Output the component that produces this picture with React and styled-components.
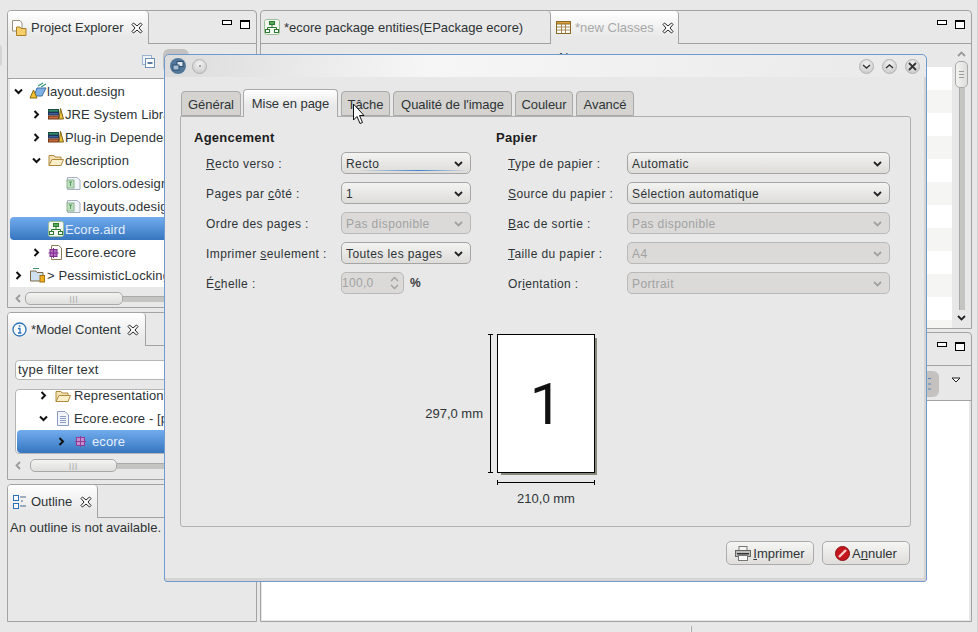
import styled, { createGlobalStyle } from "styled-components";

const GlobalStyle = createGlobalStyle`
  html, body {
    margin: 0;
    padding: 0;
    background: #e8e8e8;
  }
  body {
    font-family: "Liberation Sans", Arial, sans-serif;
    font-size: 12px;
    color: #2e3436;
    overflow: hidden;
  }
`;

const line = "#a3a3a3";

const Page = styled.div`
  position: relative;
  width: 977px;
  height: 632px;
  background: #e8e8e8;
  border-right: 1px solid #d2d2d2;
  overflow: hidden;
  display: flex;
  flex-direction: column;
`;

const Workbench = styled.div`
  display: flex;
  gap: 3px;
  padding: 10px 0 0 7px;
  height: 612px;
  box-sizing: border-box;
`;

const Trim = styled.div`
  position: absolute;
  left: -4px;
  top: 45px;
  width: 6px;
  height: 21px;
  background: #d4d4d2;
  border-radius: 3px;
`;

const Column = styled.div`
  display: flex;
  flex-direction: column;
  width: ${(p) => p.$width}px;
  gap: ${(p) => p.$gap}px;
`;

const Panel = styled.section`
  display: flex;
  flex-direction: column;
  height: ${(p) => p.$height}px;
  box-sizing: border-box;
  border: 1px solid ${line};
  border-radius: 4px 4px 0 0;
  overflow: hidden;
  flex: none;
`;

const TabBar = styled.div`
  display: flex;
  height: 33px;
  flex: none;
`;

const ViewTab = styled.div`
  display: flex;
  align-items: center;
  box-sizing: border-box;
  width: ${(p) => p.$width}px;
  padding-left: ${(p) => p.$pad ?? 3}px;
  gap: 4px;
  font-size: 13px;
  white-space: nowrap;
  border-right: 1px solid ${line};
  background: ${(p) =>
    p.$active ? "linear-gradient(#ffffff, #e8e8e8 80%)" : "transparent"};
  border-bottom: ${(p) => (p.$active ? "none" : `1px solid ${line}`)};
  border-radius: 0 4px 0 0;
  color: ${(p) => (p.$dim ? "#a9a9a9" : "#2e3436")};
`;

const TabFill = styled.div`
  flex: 1;
  display: flex;
  justify-content: flex-end;
  align-items: flex-start;
  gap: 8px;
  padding: 9px 6px 0 0;
  border-bottom: 1px solid ${line};
`;

const TabClose = styled.span`
  display: inline-flex;
  margin-left: ${(p) => p.$gap ?? 4}px;
`;

const MinBtn = styled.span`
  width: 8px;
  height: 3px;
  border: 1px solid #000;
  background: #fff;
`;

const MaxBtn = styled.span`
  width: 8px;
  height: 6px;
  border: 1px solid #000;
  border-top-width: 2px;
  background: #fff;
`;

const PanelToolbar = styled.div`
  height: 35px;
  flex: none;
  display: flex;
  box-sizing: border-box;
  border-bottom: 1px solid ${line};
  padding: 11px 0 0 134px;
  gap: 8px;
`;

const ToolbarToggle = styled.div`
  width: 26px;
  height: 24px;
  margin-top: -6px;
  background: #c3c2c0;
  border-radius: 6px;
`;

const TreeRow = styled.div`
  display: flex;
  align-items: center;
  height: 23px;
  box-sizing: border-box;
  padding-left: ${(p) => 3 + p.$depth * 18}px;
  white-space: nowrap;
  font-size: 13px;
  letter-spacing: 0.1px;
  border-radius: 4px;
  color: ${(p) => (p.$selected ? "#e4eefa" : "#2e3436")};
  background: ${(p) =>
    p.$selected ? "linear-gradient(#72acee, #3676bf)" : "transparent"};
  margin-top: ${(p) => p.$top ?? 0}px;
`;

const TreeArea = styled.div`
  margin-left: 2px;
  height: 208px;
  flex: none;
  background: #fff;
  overflow: hidden;

  ${TreeRow} {
    padding-top: 1px;
  }
`;

const Chevron = styled.span`
  display: inline-flex;
  justify-content: center;
  width: 10px;
  flex: none;
  margin-right: ${(p) => p.$gap ?? 7}px;
`;

const NodeIcon = styled.span`
  display: inline-flex;
  flex: none;
  margin-right: ${(p) => p.$gap ?? 1}px;
`;

const HScroll = styled.div`
  display: flex;
  align-items: center;
  height: 15px;
  margin: 4px 0 0 7px;
  flex: none;
`;

const ScrollArrow = styled.span`
  display: inline-flex;
  width: ${(p) => p.$width}px;
  color: #9a9a9a;
`;

const HThumb = styled.div`
  width: ${(p) => p.$width}px;
  height: 13px;
  box-sizing: border-box;
  border: 1px solid #a9a9a9;
  border-radius: 5px;
  background: linear-gradient(#f3f3f1, #dededc);
  display: flex;
  align-items: center;
  justify-content: center;
  color: #9c9c9c;
  font-size: 8px;
  letter-spacing: 1px;
`;

const HTrack = styled.div`
  flex: 1;
  height: 5px;
  background: #c4c4c2;
  border-top: 1px solid #aaa;
`;

const FilterField = styled.div`
  height: 20px;
  margin: 14px 0 0 7px;
  box-sizing: border-box;
  background: #fff;
  border: 1px solid #b5b5b5;
  border-radius: 4px;
  padding-left: 2px;
  font-size: 13px;
  line-height: 18px;
  letter-spacing: 0.2px;
  flex: none;
`;

const TreeBox = styled.div`
  height: 65px;
  margin: 9px 0 0 7px;
  padding-left: 1px;
  box-sizing: border-box;
  background: #fff;
  border: 1px solid #b5b5b5;
  border-radius: 4px;
  overflow: hidden;
  flex: none;
`;

const OutlineText = styled.p`
  margin: 2px 0 0 2px;
  font-size: 13px;
  white-space: nowrap;
`;

const TableArea = styled.div`
  flex: 1;
  display: flex;
  padding-left: 1px;
  min-height: 0;
`;

const TableBody = styled.div`
  flex: 1;
  display: flex;
  flex-direction: column;
  min-width: 0;
  padding-top: 6px;
`;

const TableHead = styled.div`
  height: 17px;
  flex: none;
  padding-left: 297px;
  font-size: 13px;
  box-sizing: border-box;
`;

const TableRow = styled.div`
  height: 23px;
  flex: none;
  background: ${(p) => (p.$odd ? "#f5f5f3" : "#ffffff")};
`;

const VScroll = styled.div`
  width: 19px;
  flex: none;
  display: flex;
  flex-direction: column;
  align-items: center;
  padding-top: 7px;
`;

const VThumb = styled.div`
  width: 13px;
  height: 27px;
  margin-top: 4px;
  box-sizing: border-box;
  border: 1px solid #a9a9a9;
  border-radius: 5px;
  background: linear-gradient(90deg, #f3f3f1, #dededc);
  display: flex;
  align-items: center;
  justify-content: center;
  flex: none;
`;

const Grip = styled.span`
  width: 5px;
  height: 5px;
  border-top: 1px solid #9c9c9c;
  border-bottom: 1px solid #9c9c9c;
  position: relative;
  &::after {
    content: "";
    position: absolute;
    left: 0;
    right: 0;
    top: 2px;
    height: 1px;
    background: #9c9c9c;
  }
`;

const VTrack = styled.div`
  width: 5px;
  height: 222px;
  margin-bottom: 5px;
  background: #c4c4c2;
  border-left: 1px solid #aaa;
  flex: none;
`;

const GrayToolbar = styled.div`
  height: 35px;
  flex: none;
  box-sizing: border-box;
  border-bottom: 1px solid ${line};
  display: flex;
  justify-content: flex-end;
  padding: 5px 10px 0 0;
  gap: 12px;
`;

const ToggledTool = styled.div`
  width: 30px;
  height: 26px;
  background: #c3c2c0;
  border-radius: 6px;
  display: flex;
  justify-content: flex-end;
  align-items: center;
  padding-right: 8px;
`;

const ViewMenu = styled.span`
  display: inline-flex;
  margin-top: 6px;
  align-self: flex-start;
`;

const WhiteArea = styled.div`
  flex: 1;
  margin: 0 2px 1px 1px;
  background: #fff;
`;

const StatusBar = styled.div`
  height: 20px;
  padding-left: 690px;
  padding-top: 14px;
  box-sizing: border-box;
`;

const StatusTick = styled.div`
  width: 1px;
  height: 6px;
  background: #a9a9a9;
  border-left: 1px solid #f4f4f4;
`;

/* dialog */

const Dialog = styled.div`
  position: absolute;
  left: 164px;
  top: 54px;
  width: 763px;
  height: 528px;
  box-sizing: border-box;
  border: 1px solid #6f99cf;
  border-radius: 5px 5px 3px 3px;
  background: #e8e8e8;
  box-shadow: inset -2px -3px 0 #d6d5d3;
  display: flex;
  flex-direction: column;
`;

const TitleBar = styled.div`
  height: 22px;
  flex: none;
  display: flex;
  align-items: center;
  padding: 0 6px 0 5px;
  gap: 6px;
  background: linear-gradient(100deg, #dcdcdc 0%, #f6f6f6 35%, #e9e9e9 100%);
  border-radius: 5px 5px 0 0;
`;

const TitleSpacer = styled.div`
  flex: 1;
`;

const RoundBtn = styled.span`
  width: 15px;
  height: 15px;
  display: inline-flex;
  align-items: center;
  justify-content: center;
  border-radius: 50%;
  background: radial-gradient(circle at 50% 30%, #f2f2f2, #c4c4c4);
  border: 1px solid #b2b2b2;
  box-sizing: border-box;
  margin-left: ${(p) => p.$gap ?? 0}px;
`;

const Dot = styled.span`
  width: 2px;
  height: 2px;
  border-radius: 50%;
  background: #8d8d8d;
`;

const DialogBody = styled.div`
  flex: 1;
  padding: 12px 0 0 15px;
  display: flex;
  flex-direction: column;
`;

const Tabs = styled.div`
  display: flex;
  align-items: flex-end;
  height: 27px;
  padding-left: 1px;
  gap: 3px;
  flex: none;
  position: relative;
  z-index: 1;
`;

const Tab = styled.div`
  height: ${(p) => (p.$active ? 28 : 25)}px;
  width: ${(p) => p.$width}px;
  margin-bottom: ${(p) => (p.$active ? -1 : 0)}px;
  margin-left: ${(p) => (p.$active ? -1 : 0)}px;
  box-sizing: border-box;
  border: 1px solid #a9a9a9;
  border-bottom: ${(p) => (p.$active ? "none" : "1px solid #a9a9a9")};
  border-radius: 4px 4px 0 0;
  display: flex;
  align-items: center;
  justify-content: center;
  padding: ${(p) => (p.$active ? "0 0 1px" : "1px 0 0")};
  background: ${(p) =>
    p.$active ? "linear-gradient(#ffffff, #e8e8e8 60%)" : "#d4d3d0"};
  font-size: 13px;
  letter-spacing: -0.05px;
  white-space: nowrap;
`;

const Pane = styled.div`
  width: 731px;
  height: 411px;
  box-sizing: border-box;
  border: 1px solid #b0b0b0;
  border-radius: 0 3px 3px 3px;
  padding: 12px 0 0 13px;
  flex: none;
`;

const FormGrid = styled.div`
  display: flex;
`;

const Section = styled.div`
  width: ${(p) => p.$width}px;
  flex: none;
`;

const SectionTitle = styled.h3`
  margin: 0 0 7px;
  height: 16px;
  padding-top: 1px;
  box-sizing: border-box;
  font-size: 13px;
  line-height: 16px;
  letter-spacing: 0.25px;
  font-weight: bold;
  color: #1c1c1c;
`;

const Rows = styled.div`
  display: flex;
  flex-direction: column;
  gap: 8px;
  padding-left: 12px;
`;

const Row = styled.div`
  display: flex;
  align-items: center;
  height: 22px;
`;

const Label = styled.label`
  width: ${(p) => p.$width}px;
  flex: none;
  padding-top: 1px;
  font-size: 12px;
  letter-spacing: 0.4px;
  white-space: nowrap;
  u {
    text-underline-offset: 1px;
  }
`;

const Combo = styled.div`
  position: relative;
  width: ${(p) => p.$width}px;
  height: 22px;
  box-sizing: border-box;
  border: 1px solid ${(p) => (p.$disabled ? "#b9b9b9" : "#a5a5a5")};
  border-radius: 5px;
  display: flex;
  align-items: center;
  justify-content: space-between;
  padding: 1px 7px 0 4px;
  font-size: 12px;
  letter-spacing: 0.4px;
  color: ${(p) => (p.$disabled ? "#a2a2a2" : "#2e3436")};
  background: ${(p) =>
    p.$disabled ? "#dbdad8" : "linear-gradient(#f3f3f1, #dddcd9)"};
  &::after {
    content: "";
    display: ${(p) => (p.$focus ? "block" : "none")};
    position: absolute;
    left: 18px;
    right: 3px;
    bottom: 2px;
    height: 1px;
    background: linear-gradient(90deg, transparent, #3d82cf 55%, transparent);
  }
`;

const Spin = styled.div`
  width: 63px;
  height: 22px;
  box-sizing: border-box;
  border: 1px solid #b9b9b9;
  border-radius: 5px;
  background: #dbdad8;
  color: #a2a2a2;
  display: flex;
  align-items: center;
  justify-content: space-between;
  padding: 0 4px 0 0;
  font-size: 12px;
  letter-spacing: 0.3px;
`;

const Unit = styled.span`
  margin-left: 6px;
  font-size: 12px;
  font-weight: bold;
  color: #3b3b3b;
`;

const Preview = styled.div`
  display: grid;
  grid-template-columns: 1fr 98px 1fr;
  grid-template-rows: 139px auto;
  margin: 40px 0 0 -12px;
`;

const HeightDim = styled.div`
  display: flex;
  justify-content: flex-end;
  align-items: center;
  gap: 5px;
  font-size: 13px;
`;

const DimText = styled.span`
  margin-top: 20px;
`;

const VDimLine = styled.div`
  width: 5px;
  height: 100%;
  box-sizing: border-box;
  border-top: 1px solid #000;
  border-bottom: 1px solid #000;
  margin-right: 4px;
  background: linear-gradient(#000, #000) center / 1px 100% no-repeat;
`;

const Sheet = styled.div`
  box-sizing: border-box;
  background: #fff;
  border: 1px solid #000;
  box-shadow: 3px 3px 0 -1px #87877c;
  display: flex;
  align-items: center;
  justify-content: center;
  font-family: Roboto, sans-serif;
  font-weight: 400;
  font-size: 58px;
  line-height: 1;
  color: #111;
`;

const WidthDim = styled.div`
  grid-column: 2;
  margin-top: 7px;
  display: flex;
  flex-direction: column;
  align-items: center;
  font-size: 13px;
  white-space: nowrap;
`;

const HDimLine = styled.div`
  width: 100%;
  height: 5px;
  box-sizing: border-box;
  border-left: 1px solid #000;
  border-right: 1px solid #000;
  margin-bottom: 6px;
  background: linear-gradient(#000, #000) center / 100% 1px no-repeat;
`;

const Footer = styled.div`
  display: flex;
  justify-content: flex-end;
  gap: 8px;
  width: 730px;
  margin-top: 14px;
`;

const Button = styled.div`
  width: 88px;
  height: 24px;
  box-sizing: border-box;
  border: 1px solid #acacac;
  border-radius: 5px;
  background: linear-gradient(#f5f5f3, #dfdedb);
  display: flex;
  align-items: center;
  justify-content: center;
  gap: 2px;
  font-size: 13px;
`;

const CursorLayer = styled.svg`
  position: absolute;
  left: 352px;
  top: 103px;
  z-index: 2;
`;

/* drawn icons */

const Down = () => (
  <svg width="9" height="7" viewBox="0 0 9 7">
    <path d="M1 1.5 L4.5 5 L8 1.5" fill="none" stroke="#111" strokeWidth="2" />
  </svg>
);

const Right = () => (
  <svg width="7" height="9" viewBox="0 0 7 9">
    <path d="M1.5 1 L5 4.5 L1.5 8" fill="none" stroke="#111" strokeWidth="2" />
  </svg>
);

const ComboArrow = ({ off }) => (
  <svg width="9" height="6" viewBox="0 0 9 6">
    <path
      d="M1 1 L4.5 4.5 L8 1"
      fill="none"
      stroke={off ? "#a2a2a2" : "#222"}
      strokeWidth="1.8"
    />
  </svg>
);

const CloseX = () => (
  <svg width="12" height="12" viewBox="0 0 12 12">
    <path
      d="M1 2.5 L2.5 1 L6 4 L9.5 1 L11 2.5 L8 6 L11 9.5 L9.5 11 L6 8 L2.5 11 L1 9.5 L4 6 Z"
      fill="#fff"
      stroke="#222"
      strokeWidth="1"
    />
  </svg>
);

const Folder = () => (
  <svg width="16" height="14" viewBox="0 0 16 14">
    <path d="M1 2.5 H6 L7 4 H13 V12.5 H1 Z" fill="#f4e2b4" stroke="#b08a3c" />
    <path d="M1 12.5 L4 6.5 H15.5 L13 12.5 Z" fill="#fbeecb" stroke="#b08a3c" />
  </svg>
);

const ExplorerIcon = () => (
  <svg width="16" height="18" viewBox="0 0 16 18">
    <path d="M1.5 1.5 H9 L11 4 V12 H1.5 Z" fill="#fff" stroke="#9a8f7a" />
    <path d="M5.5 8 H9 L10 9.5 H15 V16.5 H5.5 Z" fill="#f7cf68" stroke="#a57f2c" />
  </svg>
);

const DesignIcon = () => (
  <svg width="18" height="18" viewBox="0 0 18 18">
    <path d="M5 14 L13 14 L17 6 L8 6 Z" fill="#7fb0e6" stroke="#3f6ea8" />
    <path d="M9 4 L14 1 M12 5 L17 2" stroke="#3d9a78" strokeWidth="1.4" fill="none" />
    <path d="M4.5 8 L8 16 H1 Z" fill="#f2c230" stroke="#8a6a10" />
  </svg>
);

const LibIcon = () => (
  <svg width="16" height="12" viewBox="0 0 16 12">
    <rect x="0.5" y="1.5" width="10" height="2.5" fill="#2f8a70" stroke="#1c4d40" />
    <rect x="0.5" y="4.5" width="10" height="2.5" fill="#3a5f9c" stroke="#1f3358" />
    <rect x="0.5" y="8" width="10" height="3" fill="#c4683a" stroke="#70391c" />
    <path d="M12.5 0.5 L15.5 11 H11 Z" fill="#f0c040" stroke="#7c6214" />
  </svg>
);

const OdesignIcon = () => (
  <svg width="15" height="15" viewBox="0 0 15 15">
    <path d="M1.5 1.5 H11 L14 4 V13.5 H1.5 Z" fill="#f2f5fa" stroke="#a6b0bd" />
    <rect x="1" y="4" width="7" height="8" fill="#bfe0c0" stroke="#8cb28e" />
    <path d="M3 6 H6 M4.5 6 V10" stroke="#4f9a55" />
  </svg>
);

const DiagramIcon = () => (
  <svg width="16" height="16" viewBox="0 0 16 16">
    <rect x="0.5" y="0.5" width="15" height="15" rx="2" fill="#f2f8f0" stroke="#9dc09a" />
    <rect x="5.5" y="2.5" width="5" height="3" fill="#5aa85a" stroke="#2e7a30" />
    <path d="M8 5.5 V8.5 M3.5 10.5 V8.5 H12.5 V10.5" stroke="#2e7a30" fill="none" />
    <rect x="1.5" y="10.5" width="4" height="3" fill="#fff" stroke="#2e7a30" />
    <rect x="10.5" y="10.5" width="4" height="3" fill="#fff" stroke="#2e7a30" />
  </svg>
);

const EcoreGlyph = () => (
  <svg width="11" height="11" viewBox="0 0 11 11">
    <rect x="1.5" y="1.5" width="8" height="8" fill="#c98acb" stroke="#8d3f98" />
    <path d="M5.5 0 V11 M0 5.5 H11" stroke="#8d3f98" />
  </svg>
);

const EcoreFile = () => (
  <svg width="15" height="15" viewBox="0 0 15 15">
    <path d="M3.5 0.5 H10.5 L13.5 3 V14.5 H3.5 Z" fill="#fff" stroke="#8a7a55" />
    <rect x="2" y="4.5" width="7" height="7" fill="#b66bc0" stroke="#7c2f8a" />
    <path d="M5.5 3 V13 M0.5 8 H10.5" stroke="#7c2f8a" />
  </svg>
);

const ProjectClosed = () => (
  <svg width="17" height="16" viewBox="0 0 17 16">
    <path d="M1.5 4 H7 L8 5.5 H14 V14 H1.5 Z" fill="#cfe0f2" stroke="#7a6a45" />
    <path d="M4 1.5 L10 1.5" stroke="#3d9a78" />
    <rect x="11" y="8.5" width="4.5" height="6.5" fill="#f0b020" stroke="#a37410" />
  </svg>
);

const DocIcon = () => (
  <svg width="12" height="15" viewBox="0 0 12 15">
    <path d="M0.5 0.5 H8 L11.5 4 V14.5 H0.5 Z" fill="#f1f4fb" stroke="#8b9cc0" />
    <path d="M3 5.5 H9 M3 7.5 H9 M3 9.5 H9 M3 11.5 H9" stroke="#8b9cc0" />
  </svg>
);

const InfoIcon = () => (
  <svg width="15" height="15" viewBox="0 0 15 15">
    <circle cx="7.5" cy="7.5" r="6.5" fill="#fff" stroke="#2a72b8" strokeWidth="1.3" />
    <path d="M6 6.5 H8 V11 M6 11 H9.5" stroke="#2a72b8" strokeWidth="1.3" fill="none" />
    <rect x="6.8" y="3.2" width="1.6" height="1.6" fill="#2a72b8" />
  </svg>
);

const OutlineIcon = () => (
  <svg width="14" height="14" viewBox="0 0 14 14">
    <rect x="0.5" y="0.5" width="5" height="5" fill="#fff" stroke="#2a72b8" />
    <rect x="0.5" y="8.5" width="5" height="5" fill="#fff" stroke="#2a72b8" />
    <path d="M7 2 H13 M8 6 H10 M7 11 H13" stroke="#4a6a8a" fill="none" />
  </svg>
);

const TableIcon = () => (
  <svg width="15" height="13" viewBox="0 0 15 13">
    <rect x="0.5" y="0.5" width="14" height="12" fill="#fff" stroke="#8a6a20" />
    <rect x="0.5" y="0.5" width="14" height="2.5" fill="#d8a040" stroke="#8a6a20" />
    <path d="M5.5 3 V12 M9.5 3 V12 M1 6 H14 M1 9 H14" stroke="#a58a50" />
  </svg>
);

const CollapseAll = () => (
  <svg width="13" height="13" viewBox="0 0 13 13">
    <rect x="0.5" y="0.5" width="9" height="9" fill="#eef3fa" stroke="#9db4d0" />
    <rect x="3.5" y="3.5" width="9" height="9" fill="#fff" stroke="#6d8fb8" />
    <path d="M5.5 8 H10.5" stroke="#24507e" strokeWidth="1.4" />
  </svg>
);

const AppGlobe = () => (
  <svg width="16" height="16" viewBox="0 0 16 16">
    <circle cx="8" cy="8" r="8" fill="#51789a" />
    <rect x="7" y="3.5" width="6" height="5" fill="#dfe8f0" stroke="#2e4e6e" />
    <rect x="3" y="7" width="6" height="5" fill="#a8c0d6" stroke="#2e4e6e" />
  </svg>
);

const Chev = ({ up }) => (
  <svg width="9" height="7" viewBox="0 0 9 7">
    <path d={up ? "M1 5 L4.5 2 L8 5" : "M1 2 L4.5 5 L8 2"} fill="none" stroke="#333" strokeWidth="1.4" />
  </svg>
);

const DialogX = () => (
  <svg width="9" height="9" viewBox="0 0 9 9">
    <path d="M1 1 L8 8 M8 1 L1 8" stroke="#333" strokeWidth="1.8" />
  </svg>
);

const SpinArrows = () => (
  <svg width="9" height="14" viewBox="0 0 9 14">
    <path d="M1 5 L4.5 1.5 L8 5 M1 9 L4.5 12.5 L8 9" fill="none" stroke="#a2a2a2" strokeWidth="1.4" />
  </svg>
);

const LeftArrow = () => (
  <svg width="6" height="9" viewBox="0 0 6 9">
    <path d="M5 1 L1.5 4.5 L5 8" fill="none" stroke="currentColor" strokeWidth="1.8" />
  </svg>
);

const UpArrow = ({ down }) => (
  <svg width="9" height="6" viewBox="0 0 9 6">
    <path
      d={down ? "M1 1 L4.5 4.5 L8 1" : "M1 5 L4.5 1.5 L8 5"}
      fill="none"
      stroke={down ? "#222" : "#999"}
      strokeWidth="1.8"
    />
  </svg>
);

const TreeGlyph = () => (
  <svg width="3" height="12" viewBox="0 0 3 12">
    <path d="M0 0.5 H3 M0 6 H3 M0 11 H3" stroke="#5b80b8" />
  </svg>
);

const Printer = () => (
  <svg width="16" height="15" viewBox="0 0 16 15">
    <rect x="4" y="0.5" width="8" height="4" fill="#f6f6f6" stroke="#777" />
    <rect x="0.5" y="4.5" width="15" height="6" fill="#bdbdbd" stroke="#666" />
    <rect x="2" y="7" width="12" height="1.5" fill="#333" />
    <rect x="3.5" y="9.5" width="9" height="5" fill="#fafafa" stroke="#777" />
  </svg>
);

const StopIcon = () => (
  <svg width="15" height="15" viewBox="0 0 15 15">
    <circle cx="7.5" cy="7.5" r="7" fill="#c4161c" stroke="#8a1014" />
    <path d="M4 11 L11 4" stroke="#f6d0d0" strokeWidth="2.4" />
  </svg>
);

const Arrowhead = () => (
  <svg width="10" height="6" viewBox="0 0 10 6">
    <path d="M1 1 H9 L5 5 Z" fill="#fff" stroke="#222" />
  </svg>
);

const Node = ({ depth, arrow, icon, text, gap, chevGap, top, selected }) => (
  <TreeRow $depth={depth} $top={top} $selected={selected}>
    <Chevron $gap={chevGap}>
      {arrow === "down" ? <Down /> : arrow === "right" ? <Right /> : null}
    </Chevron>
    <NodeIcon $gap={gap}>{icon}</NodeIcon>
    {text}
  </TreeRow>
);

const Select = ({ width, value, disabled, focus }) => (
  <Combo $width={width} $disabled={disabled} $focus={focus}>
    {value}
    <ComboArrow off={disabled} />
  </Combo>
);

const stripes = [0, 1, 0, 1, 0, 1, 0, 1, 0, 1, 0, 1];

export default function App() {
  return (
    <>
      <GlobalStyle />
      <Page>
        <Trim />
        <Workbench>
          <Column $width={250} $gap={4}>
            <Panel $height={298}>
              <TabBar>
                <ViewTab $active $width={141}>
                  <ExplorerIcon />
                  Project Explorer
                  <TabClose><CloseX /></TabClose>
                </ViewTab>
                <TabFill><MinBtn /><MaxBtn /></TabFill>
              </TabBar>
              <PanelToolbar>
                <CollapseAll />
                <ToolbarToggle />
              </PanelToolbar>
              <TreeArea>
                <Node depth={0} arrow="down" chevGap={6} gap={0} icon={<DesignIcon />} text="layout.design" />
                <Node depth={1} arrow="right" icon={<LibIcon />} text="JRE System Library" />
                <Node depth={1} arrow="right" icon={<LibIcon />} text="Plug-in Dependencies" />
                <Node depth={1} arrow="down" icon={<Folder />} text="description" />
                <Node depth={2} gap={2} icon={<OdesignIcon />} text="colors.odesign" />
                <Node depth={2} gap={2} icon={<OdesignIcon />} text="layouts.odesign" />
                <Node depth={1} selected icon={<DiagramIcon />} text="Ecore.aird" />
                <Node depth={1} arrow="right" gap={2} icon={<EcoreFile />} text="Ecore.ecore" />
                <Node depth={0} arrow="right" chevGap={6} icon={<ProjectClosed />} text="> PessimisticLocking" />
              </TreeArea>
              <HScroll>
                <ScrollArrow $width={10}><LeftArrow /></ScrollArrow>
                <HThumb $width={98}>|||</HThumb>
                <HTrack />
              </HScroll>
            </Panel>
            <Panel $height={168}>
              <TabBar>
                <ViewTab $active $width={138} $pad={4}>
                  <InfoIcon />
                  *Model Content
                  <TabClose $gap={2}><CloseX /></TabClose>
                </ViewTab>
                <TabFill />
              </TabBar>
              <FilterField>type filter text</FilterField>
              <TreeBox>
                <Node depth={1} top={-6} arrow="right" chevGap={7} gap={3} icon={<Folder />} text="Representations" />
                <Node depth={1} arrow="down" chevGap={9} gap={5} icon={<DocIcon />} text="Ecore.ecore - [p" />
                <Node depth={2} selected arrow="right" chevGap={9} gap={6} icon={<EcoreGlyph />} text="ecore" />
              </TreeBox>
              <HScroll>
                <ScrollArrow $width={15}><LeftArrow /></ScrollArrow>
                <HThumb $width={87}>|||</HThumb>
                <HTrack />
              </HScroll>
            </Panel>
            <Panel $height={138}>
              <TabBar>
                <ViewTab $active $width={90} $pad={5}>
                  <OutlineIcon />
                  Outline
                  <TabClose><CloseX /></TabClose>
                </ViewTab>
                <TabFill />
              </TabBar>
              <OutlineText>An outline is not available.</OutlineText>
            </Panel>
          </Column>
          <Column $width={712} $gap={3}>
            <Panel $height={319}>
              <TabBar>
                <ViewTab $width={290}>
                  <DiagramIcon />
                  *ecore package entities(EPackage ecore)
                </ViewTab>
                <ViewTab $active $dim $width={128} $pad={5}>
                  <TableIcon />
                  *new Classes
                  <TabClose><CloseX /></TabClose>
                </ViewTab>
                <TabFill><MinBtn /><MaxBtn /></TabFill>
              </TabBar>
              <TableArea>
                <TableBody>
                  <TableHead>N</TableHead>
                  {stripes.map((odd, i) => (
                    <TableRow key={i} $odd={odd} />
                  ))}
                </TableBody>
                <VScroll>
                  <UpArrow />
                  <VThumb><Grip /></VThumb>
                  <VTrack />
                  <UpArrow down />
                </VScroll>
              </TableArea>
            </Panel>
            <Panel $height={290}>
              <TabBar>
                <TabFill><MinBtn /><MaxBtn /></TabFill>
              </TabBar>
              <GrayToolbar>
                <ToggledTool><TreeGlyph /></ToggledTool>
                <ViewMenu><Arrowhead /></ViewMenu>
              </GrayToolbar>
              <WhiteArea />
            </Panel>
          </Column>
        </Workbench>
        <StatusBar><StatusTick /></StatusBar>

        <Dialog>
          <TitleBar>
            <AppGlobe />
            <RoundBtn><Dot /></RoundBtn>
            <TitleSpacer />
            <RoundBtn><Chev /></RoundBtn>
            <RoundBtn $gap={2}><Chev up /></RoundBtn>
            <RoundBtn $gap={2}><DialogX /></RoundBtn>
          </TitleBar>
          <DialogBody>
            <Tabs>
              <Tab $width={60}>Général</Tab>
              <Tab $active $width={95}>Mise en page</Tab>
              <Tab $width={49}>Tâche</Tab>
              <Tab $width={119}>Qualité de l'image</Tab>
              <Tab $width={58}>Couleur</Tab>
              <Tab $width={58}>Avancé</Tab>
            </Tabs>
            <Pane>
              <FormGrid>
                <Section $width={302}>
                  <SectionTitle>Agencement</SectionTitle>
                  <Rows>
                    <Row>
                      <Label $width={135}><u>R</u>ecto verso :</Label>
                      <Select width={130} value="Recto" focus />
                    </Row>
                    <Row>
                      <Label $width={135}>Pages par <u>c</u>ôté :</Label>
                      <Select width={130} value="1" />
                    </Row>
                    <Row>
                      <Label $width={135}>Ordre des pages :</Label>
                      <Select width={130} value="Pas disponible" disabled />
                    </Row>
                    <Row>
                      <Label $width={135}>Imprimer <u>s</u>eulement :</Label>
                      <Select width={130} value="Toutes les pages" />
                    </Row>
                    <Row>
                      <Label $width={135}>É<u>c</u>helle :</Label>
                      <Spin>100,0<SpinArrows /></Spin>
                      <Unit>%</Unit>
                    </Row>
                  </Rows>
                </Section>
                <Section $width={400}>
                  <SectionTitle>Papier</SectionTitle>
                  <Rows>
                    <Row>
                      <Label $width={119}><u>T</u>ype de papier :</Label>
                      <Select width={263} value="Automatic" />
                    </Row>
                    <Row>
                      <Label $width={119}><u>S</u>ource du papier :</Label>
                      <Select width={263} value="Sélection automatique" />
                    </Row>
                    <Row>
                      <Label $width={119}><u>B</u>ac de sortie :</Label>
                      <Select width={263} value="Pas disponible" disabled />
                    </Row>
                    <Row>
                      <Label $width={119}><u>T</u>aille du papier :</Label>
                      <Select width={263} value="A4" disabled />
                    </Row>
                    <Row>
                      <Label $width={119}>Or<u>i</u>entation :</Label>
                      <Select width={263} value="Portrait" disabled />
                    </Row>
                  </Rows>
                </Section>
              </FormGrid>
              <Preview>
                <HeightDim>
                  <DimText>297,0 mm</DimText>
                  <VDimLine />
                </HeightDim>
                <Sheet>1</Sheet>
                <div />
                <WidthDim>
                  <HDimLine />
                  210,0 mm
                </WidthDim>
              </Preview>
            </Pane>
            <Footer>
              <Button><Printer /><span><u>I</u>mprimer</span></Button>
              <Button><StopIcon /><span>A<u>n</u>nuler</span></Button>
            </Footer>
          </DialogBody>
        </Dialog>

        <CursorLayer width="14" height="23" viewBox="0 0 14 23">
          <path
            d="M1.5 1 V17 L5 13.5 L8 20.5 L10.5 19.5 L7.5 12.5 L12 12.5 Z"
            fill="#fff"
            stroke="#111"
          />
        </CursorLayer>
      </Page>
    </>
  );
}
